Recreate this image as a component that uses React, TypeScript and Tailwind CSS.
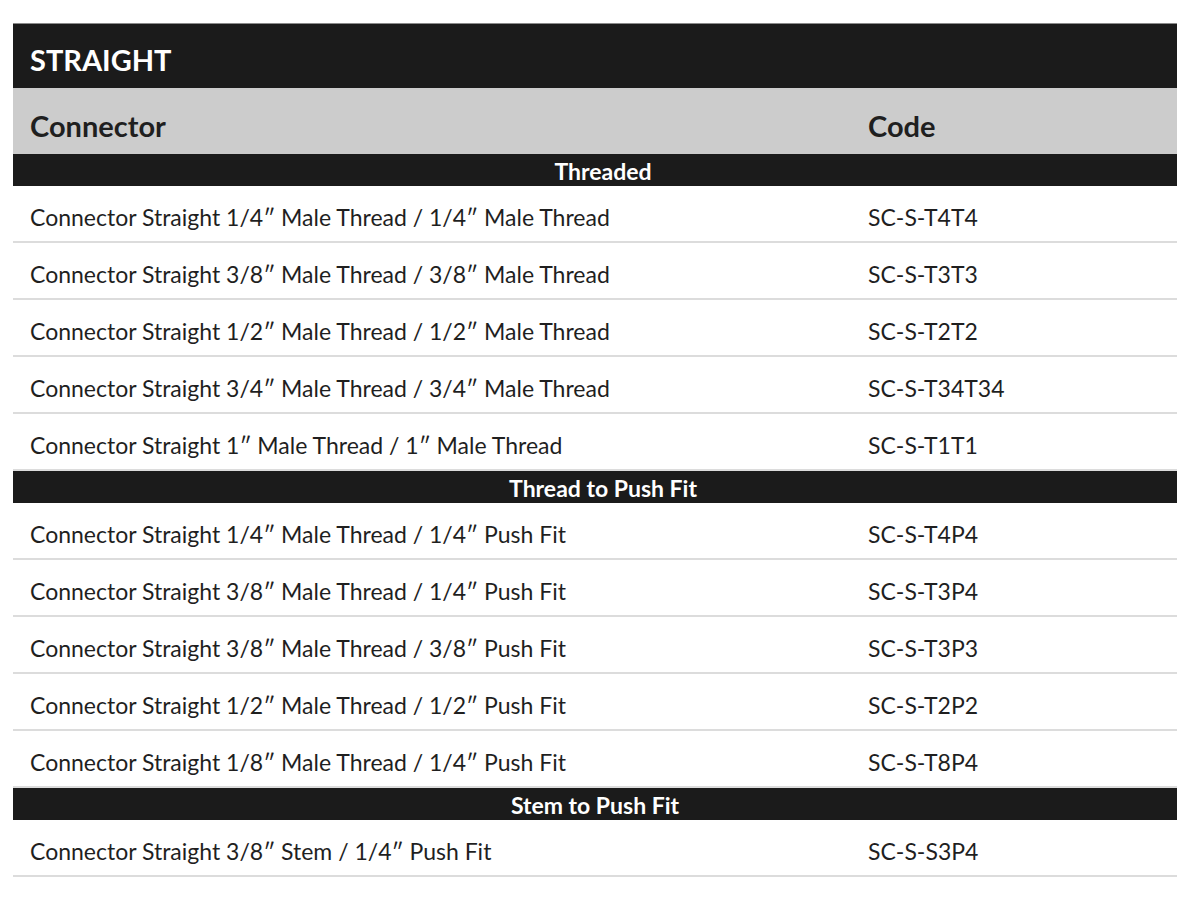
type Item = { name: string; code: string }
type Section = { title: string; shifted: boolean; items: Item[] }

const sections: Section[] = [
  {
    title: "Threaded",
    shifted: true,
    items: [
      { name: "Connector Straight 1/4\u2033 Male Thread / 1/4\u2033 Male Thread", code: "SC-S-T4T4" },
      { name: "Connector Straight 3/8\u2033 Male Thread / 3/8\u2033 Male Thread", code: "SC-S-T3T3" },
      { name: "Connector Straight 1/2\u2033 Male Thread / 1/2\u2033 Male Thread", code: "SC-S-T2T2" },
      { name: "Connector Straight 3/4\u2033 Male Thread / 3/4\u2033 Male Thread", code: "SC-S-T34T34" },
      { name: "Connector Straight 1\u2033 Male Thread / 1\u2033 Male Thread", code: "SC-S-T1T1" },
    ],
  },
  {
    title: "Thread to Push Fit",
    shifted: true,
    items: [
      { name: "Connector Straight 1/4\u2033 Male Thread / 1/4\u2033 Push Fit", code: "SC-S-T4P4" },
      { name: "Connector Straight 3/8\u2033 Male Thread / 1/4\u2033 Push Fit", code: "SC-S-T3P4" },
      { name: "Connector Straight 3/8\u2033 Male Thread / 3/8\u2033 Push Fit", code: "SC-S-T3P3" },
      { name: "Connector Straight 1/2\u2033 Male Thread / 1/2\u2033 Push Fit", code: "SC-S-T2P2" },
      { name: "Connector Straight 1/8\u2033 Male Thread / 1/4\u2033 Push Fit", code: "SC-S-T8P4" },
    ],
  },
  {
    title: "Stem to Push Fit",
    shifted: false,
    items: [
      { name: "Connector Straight 3/8\u2033 Stem / 1/4\u2033 Push Fit", code: "SC-S-S3P4" },
    ],
  },
]

const Row = ({ name, code }: Item) => {
  return (
    <div className="flex h-[57px] items-center border-b-2 border-[#dcdcdc] pt-[8px] text-[23px] text-[#1f1f1f]">
      <div className="w-[855px] pl-[17px]">{name}</div>
      <div className="flex-1">{code}</div>
    </div>
  )
}

const App = () => {
  return (
    <div className="min-h-[910px] w-full bg-white pt-[23px] font-['Lato',sans-serif]">
      <div className="mx-[13px] w-[1164px]">
        <div className="flex h-[65px] items-center border-t border-[#8a8a8a] bg-[#1b1b1b] pl-[17px] pt-[8px] text-[29px] font-bold text-white">
          STRAIGHT
        </div>
        <div className="flex h-[66px] items-center bg-[#cccccc] pt-[10px] text-[29px] font-bold text-[#1f1f1f]">
          <div className="w-[855px] pl-[17px]">Connector</div>
          <div className="flex-1">Code</div>
        </div>
        {sections.map((section) => (
          <div key={section.title}>
            <div className={section.shifted
              ? "flex h-[32px] items-center justify-center bg-[#1b1b1b] pl-[16px] pt-[2px] text-[23px] font-bold text-white"
              : "flex h-[32px] items-center justify-center bg-[#1b1b1b] pt-[2px] text-[23px] font-bold text-white"}>
              {section.title}
            </div>
            {section.items.map((item) => <Row name={item.name} code={item.code} key={item.code} />)}
          </div>
        ))}
      </div>
    </div>
  )
}

export default App
